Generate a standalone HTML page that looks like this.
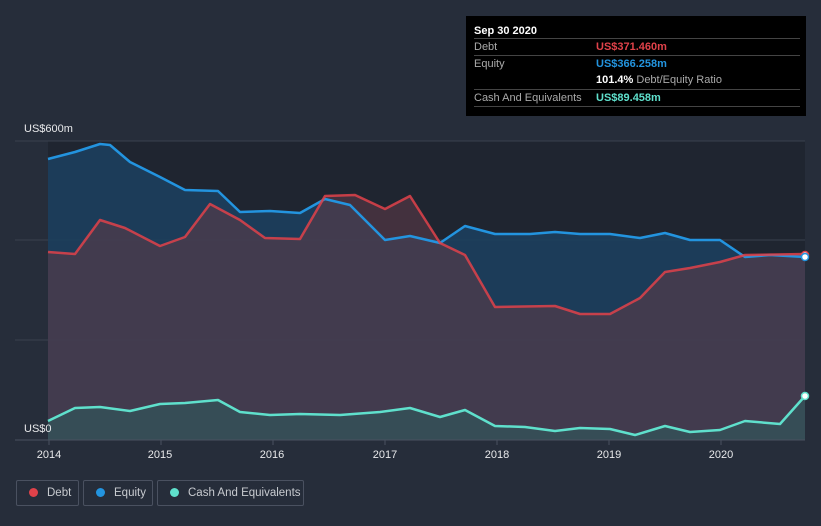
<!DOCTYPE html>
<html><head><style>
body{margin:0;background:#262d3a;font-family:"Liberation Sans",sans-serif;}
.wrap{position:relative;width:821px;height:526px;overflow:hidden}
.tip{position:absolute;left:466px;top:16px;width:340px;height:100px;background:#000;color:#aaa;font-size:11px}
.tip .r{position:absolute;left:8px;right:6px;border-top:1px solid #444;height:17px;line-height:17px}
.leg{position:absolute;top:480px;height:26px;border:1px solid #4a5160;border-radius:2px;color:#c8cbd0;font-size:11.5px;line-height:25px;box-sizing:border-box;white-space:nowrap;overflow:hidden}
.dot{display:inline-block;width:9px;height:9px;border-radius:50%;margin:0 9px 0 12px;vertical-align:-1px}
</style></head><body><div class="wrap">
<svg width="821" height="526" style="position:absolute;left:0;top:0">
<rect x="48" y="141" width="757" height="299" fill="#1f2530"/>
<g stroke="#3a414e" stroke-width="1"><line x1="15" y1="141" x2="805" y2="141"/><line x1="15" y1="240" x2="805" y2="240"/><line x1="15" y1="340" x2="805" y2="340"/></g>
<path d="M48,159 L75,152 L100,144 L110,145 L130,162 L160,177 L185,190 L218,191 L240,212 L270,211 L300,213 L325,199 L350,205 L360,215 L385,240 L410,236 L440,243 L465,226 L495,234 L530,234 L555,232 L580,234 L610,234 L640,238 L665,233 L690,240 L720,240 L745,257 L770,255 L805,257 L805,440 L48,440Z" fill="#1c3f5e" opacity="0.9"/>
<path d="M48,252 L75,254 L100,220 L125,228 L160,246 L185,237 L210,204 L240,220 L265,238 L300,239 L325,196 L355,195 L385,209 L410,196 L440,243 L465,255 L495,307 L555,306 L580,314 L610,314 L640,298 L665,272 L690,268 L720,262 L745,255 L805,254 L805,440 L48,440Z" fill="#5c3a48" opacity="0.6"/>
<path d="M48,159 L75,152 L100,144 L110,145 L130,162 L160,177 L185,190 L218,191 L240,212 L270,211 L300,213 L325,199 L350,205 L360,215 L385,240 L410,236 L440,243 L465,226 L495,234 L530,234 L555,232 L580,234 L610,234 L640,238 L665,233 L690,240 L720,240 L745,257 L770,255 L805,257" fill="none" stroke="#2394df" stroke-width="2.5" stroke-linejoin="round"/>
<path d="M48,252 L75,254 L100,220 L125,228 L160,246 L185,237 L210,204 L240,220 L265,238 L300,239 L325,196 L355,195 L385,209 L410,196 L440,243 L465,255 L495,307 L555,306 L580,314 L610,314 L640,298 L665,272 L690,268 L720,262 L745,255 L805,254" fill="none" stroke="#e0424a" stroke-width="2.5" stroke-linejoin="round" opacity="0.85"/>
<path d="M48,421 L75,408 L100,407 L130,411 L160,404 L185,403 L218,400 L240,412 L270,415 L300,414 L340,415 L380,412 L410,408 L440,417 L465,410 L495,426 L525,427 L555,431 L580,428 L610,429 L635,435 L665,426 L690,432 L720,430 L745,421 L780,424 L805,396 L805,440 L48,440Z" fill="#2f5a5c" opacity="0.6"/>
<path d="M48,421 L75,408 L100,407 L130,411 L160,404 L185,403 L218,400 L240,412 L270,415 L300,414 L340,415 L380,412 L410,408 L440,417 L465,410 L495,426 L525,427 L555,431 L580,428 L610,429 L635,435 L665,426 L690,432 L720,430 L745,421 L780,424 L805,396" fill="none" stroke="#5fe0cc" stroke-width="2.5" stroke-linejoin="round"/>
<circle cx="805" cy="255" r="3.5" fill="#fff" stroke="#e0424a" stroke-width="1.5"/>
<circle cx="805" cy="257" r="3.5" fill="#fff" stroke="#2394df" stroke-width="1.5"/>
<circle cx="805" cy="396" r="3.5" fill="#fff" stroke="#5fe0cc" stroke-width="1.5"/>
<line x1="15" y1="440" x2="805" y2="440" stroke="#4a5160"/>
<g stroke="#4a5160"><line x1="49" y1="440" x2="49" y2="445"/><line x1="161" y1="440" x2="161" y2="445"/><line x1="273" y1="440" x2="273" y2="445"/><line x1="385" y1="440" x2="385" y2="445"/><line x1="497" y1="440" x2="497" y2="445"/><line x1="609" y1="440" x2="609" y2="445"/><line x1="721" y1="440" x2="721" y2="445"/></g>
<g fill="#e8e9eb" font-size="11" text-anchor="middle" font-family="Liberation Sans"><text x="49" y="458">2014</text><text x="160" y="458">2015</text><text x="272" y="458">2016</text><text x="385" y="458">2017</text><text x="497" y="458">2018</text><text x="609" y="458">2019</text><text x="721" y="458">2020</text></g>
<g fill="#e8e9eb" font-size="11" font-family="Liberation Sans"><text x="24" y="132">US$600m</text><text x="24" y="432">US$0</text></g>
</svg>
<div class="tip">
<div style="position:absolute;left:8px;top:9px;color:#fff;font-weight:bold">Sep 30 2020</div>
<div class="r" style="top:22px">Debt<span style="position:absolute;left:122px;color:#e0424a;font-weight:bold">US$371.460m</span></div>
<div class="r" style="top:39px">Equity<span style="position:absolute;left:122px;color:#2394df;font-weight:bold">US$366.258m</span></div>
<div class="r" style="top:56px;border:0"><span style="position:absolute;left:122px"><b style="color:#fff">101.4%</b> Debt/Equity Ratio</span></div>
<div class="r" style="top:73px">Cash And Equivalents<span style="position:absolute;left:122px;color:#5fe0cc;font-weight:bold">US$89.458m</span></div>
<div class="r" style="top:90px;height:0"></div>
</div>
<div class="leg" style="left:16px;width:63px"><span class="dot" style="background:#e0424a"></span>Debt</div>
<div class="leg" style="left:83px;width:70px"><span class="dot" style="background:#2394df"></span>Equity</div>
<div class="leg" style="left:157px;width:147px"><span class="dot" style="background:#5fe0cc"></span>Cash And Equivalents</div>
</div></body></html>
